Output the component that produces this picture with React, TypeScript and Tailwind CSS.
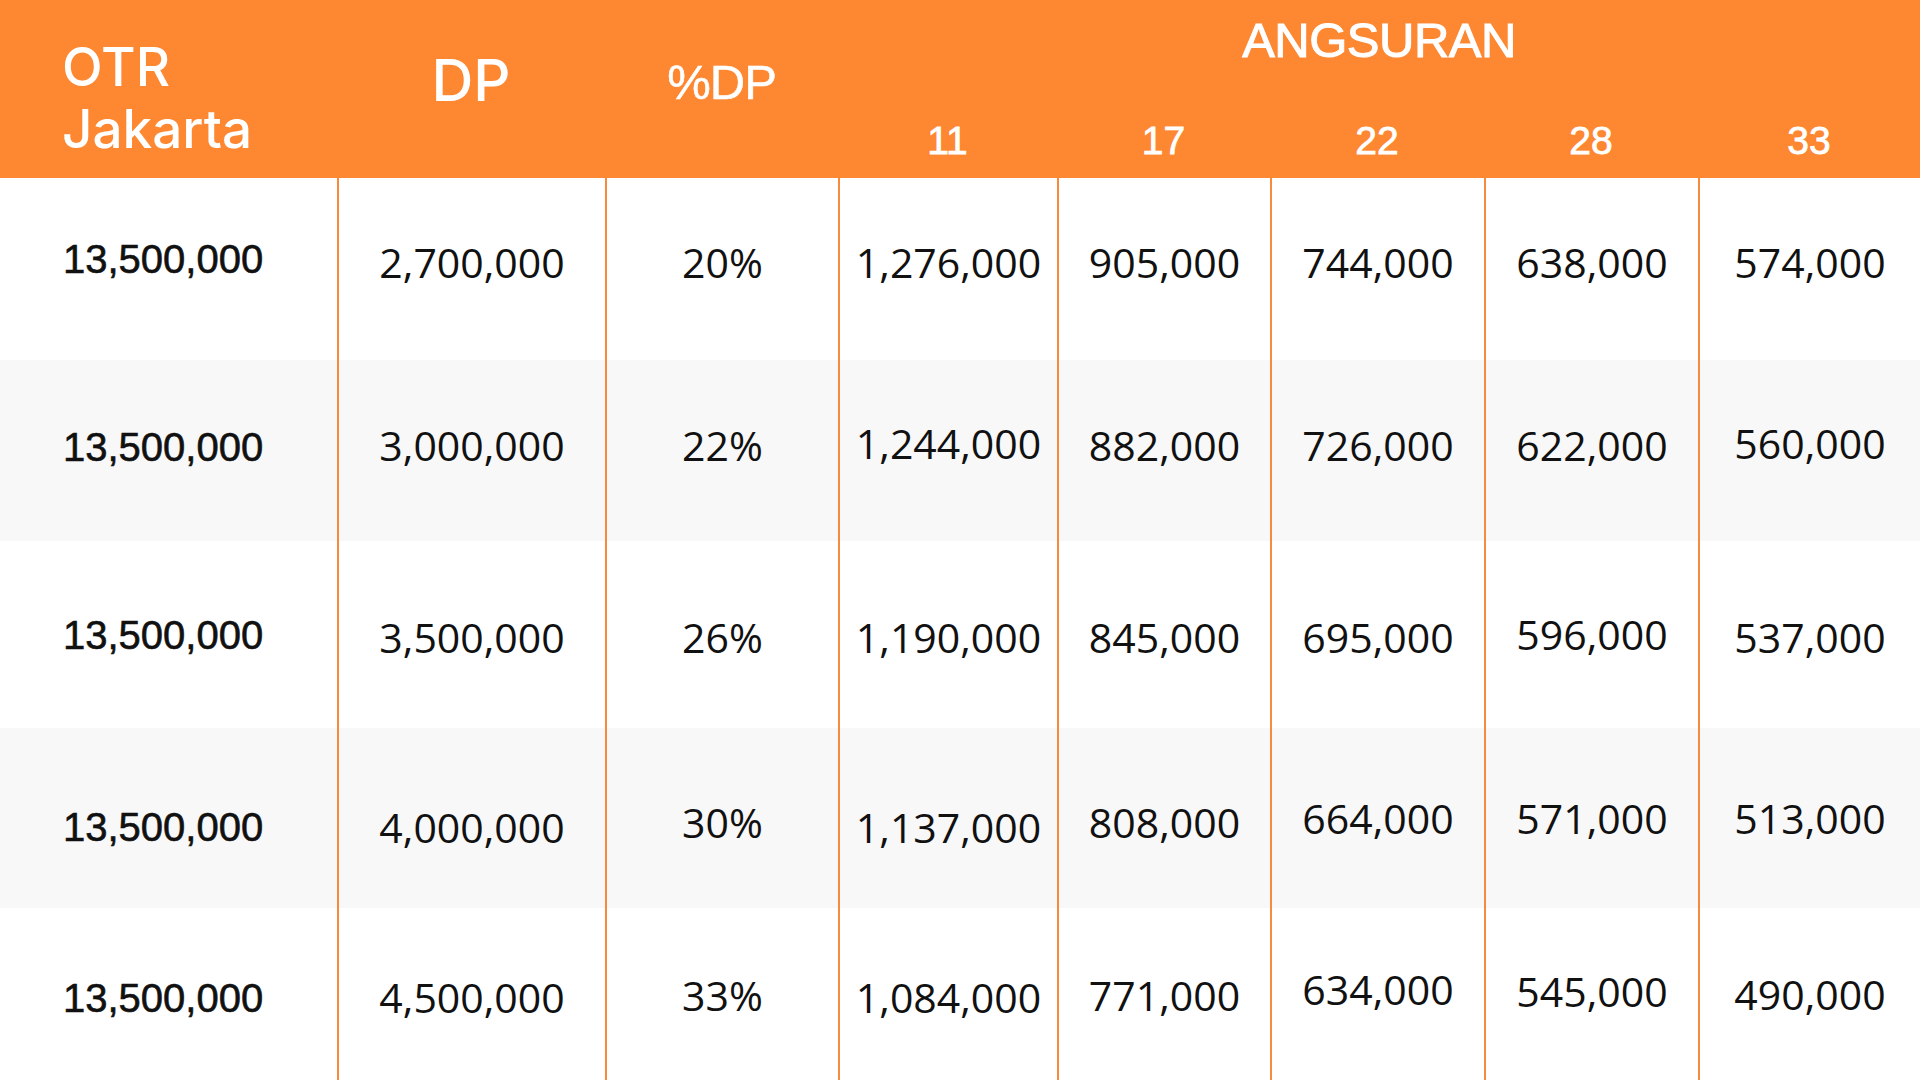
import React from "react";

type Cell = { t: string; o: string };

const rows: { h: string; bg: string; cells: Cell[] }[] = [
  {
    h: "h-[182px]",
    bg: "bg-white",
    cells: [
      { t: "13,500,000", o: "translate-y-[-10px]" },
      { t: "2,700,000", o: "translate-y-[-7px]" },
      { t: "20%", o: "translate-y-[-7px]" },
      { t: "1,276,000", o: "translate-y-[-7px]" },
      { t: "905,000", o: "translate-y-[-7px]" },
      { t: "744,000", o: "translate-y-[-7px]" },
      { t: "638,000", o: "translate-y-[-7px]" },
      { t: "574,000", o: "translate-y-[-7px]" },
    ],
  },
  {
    h: "h-[181px]",
    bg: "bg-[#f8f8f8]",
    cells: [
      { t: "13,500,000", o: "translate-y-[-4px]" },
      { t: "3,000,000", o: "translate-y-[-5px]" },
      { t: "22%", o: "translate-y-[-5px]" },
      { t: "1,244,000", o: "translate-y-[-7px]" },
      { t: "882,000", o: "translate-y-[-5px]" },
      { t: "726,000", o: "translate-y-[-5px]" },
      { t: "622,000", o: "translate-y-[-5px]" },
      { t: "560,000", o: "translate-y-[-7px]" },
    ],
  },
  {
    h: "h-[187px]",
    bg: "bg-white",
    cells: [
      { t: "13,500,000", o: "translate-y-[0px]" },
      { t: "3,500,000", o: "translate-y-[3px]" },
      { t: "26%", o: "translate-y-[3px]" },
      { t: "1,190,000", o: "translate-y-[3px]" },
      { t: "845,000", o: "translate-y-[3px]" },
      { t: "695,000", o: "translate-y-[3px]" },
      { t: "596,000", o: "translate-y-[0px]" },
      { t: "537,000", o: "translate-y-[3px]" },
    ],
  },
  {
    h: "h-[180px]",
    bg: "bg-[#f8f8f8]",
    cells: [
      { t: "13,500,000", o: "translate-y-[9px]" },
      { t: "4,000,000", o: "translate-y-[9px]" },
      { t: "30%", o: "translate-y-[4px]" },
      { t: "1,137,000", o: "translate-y-[9px]" },
      { t: "808,000", o: "translate-y-[4px]" },
      { t: "664,000", o: "translate-y-[0px]" },
      { t: "571,000", o: "translate-y-[0px]" },
      { t: "513,000", o: "translate-y-[0px]" },
    ],
  },
  {
    h: "h-[172px]",
    bg: "bg-white",
    cells: [
      { t: "13,500,000", o: "translate-y-[4px]" },
      { t: "4,500,000", o: "translate-y-[3px]" },
      { t: "33%", o: "translate-y-[1px]" },
      { t: "1,084,000", o: "translate-y-[3px]" },
      { t: "771,000", o: "translate-y-[1px]" },
      { t: "634,000", o: "translate-y-[-5px]" },
      { t: "545,000", o: "translate-y-[-3px]" },
      { t: "490,000", o: "translate-y-[0px]" },
    ],
  },
];

const cols = "grid grid-cols-[337px_268px_233px_219px_213px_214px_214px_222px]";
const tenors = ["11", "17", "22", "28", "33"];

export default function App() {
  return (
    <div className="w-[1920px] h-[1080px] overflow-hidden bg-white">
      {/* Header */}
      <div className="h-[178px] bg-[#fe8731] flex text-white">
        <div className="w-[337px] pl-[62px] pt-[36px] flex flex-col font-['Inter',sans-serif] font-medium text-[53px] leading-[62px]">
          <span>OTR</span>
          <span>Jakarta</span>
        </div>
        <div className="w-[268px] flex items-center justify-center pb-[19px] font-['Inter',sans-serif] font-medium text-[58px] leading-none">
          DP
        </div>
        <div className="w-[233px] flex items-center justify-center pb-[14px] font-['Liberation_Sans',Arial,sans-serif] text-[49px] leading-none tracking-[-1px] [-webkit-text-stroke:0.5px_white]">
          %DP
        </div>
        <div className="w-[1082px] flex flex-col">
          <div className="h-[80px] flex items-center justify-center font-['Liberation_Sans',Arial,sans-serif] text-[49px] leading-none tracking-[-0.5px] [-webkit-text-stroke:1px_white]">
            ANGSURAN
          </div>
          <div className="h-[98px] pt-[22px] grid grid-cols-[219px_213px_214px_214px_222px] items-center">
            {tenors.map((t) => (
              <div
                key={t}
                className="text-center font-['Liberation_Sans',Arial,sans-serif] text-[39px] leading-none [-webkit-text-stroke:0.8px_white]"
              >
                {t}
              </div>
            ))}
          </div>
        </div>
      </div>

      {/* Body */}
      {rows.map((r, ri) => (
        <div key={ri} className={`${cols} ${r.h} ${r.bg}`}>
          {r.cells.map((c, ci) =>
            ci === 0 ? (
              <div key={ci} className="flex items-center pl-[63px]">
                <span
                  className={`${c.o} font-['Liberation_Sans',Arial,sans-serif] text-[40px] leading-none text-[#111] [-webkit-text-stroke:0.6px_#111]`}
                >
                  {c.t}
                </span>
              </div>
            ) : (
              <div
                key={ci}
                className="flex items-center justify-center border-l-2 border-[#f78a3c]"
              >
                <span
                  className={`${c.o} font-['Open_Sans',sans-serif] text-[41px] leading-none text-[#111]`}
                >
                  {c.t}
                </span>
              </div>
            )
          )}
        </div>
      ))}
    </div>
  );
}
